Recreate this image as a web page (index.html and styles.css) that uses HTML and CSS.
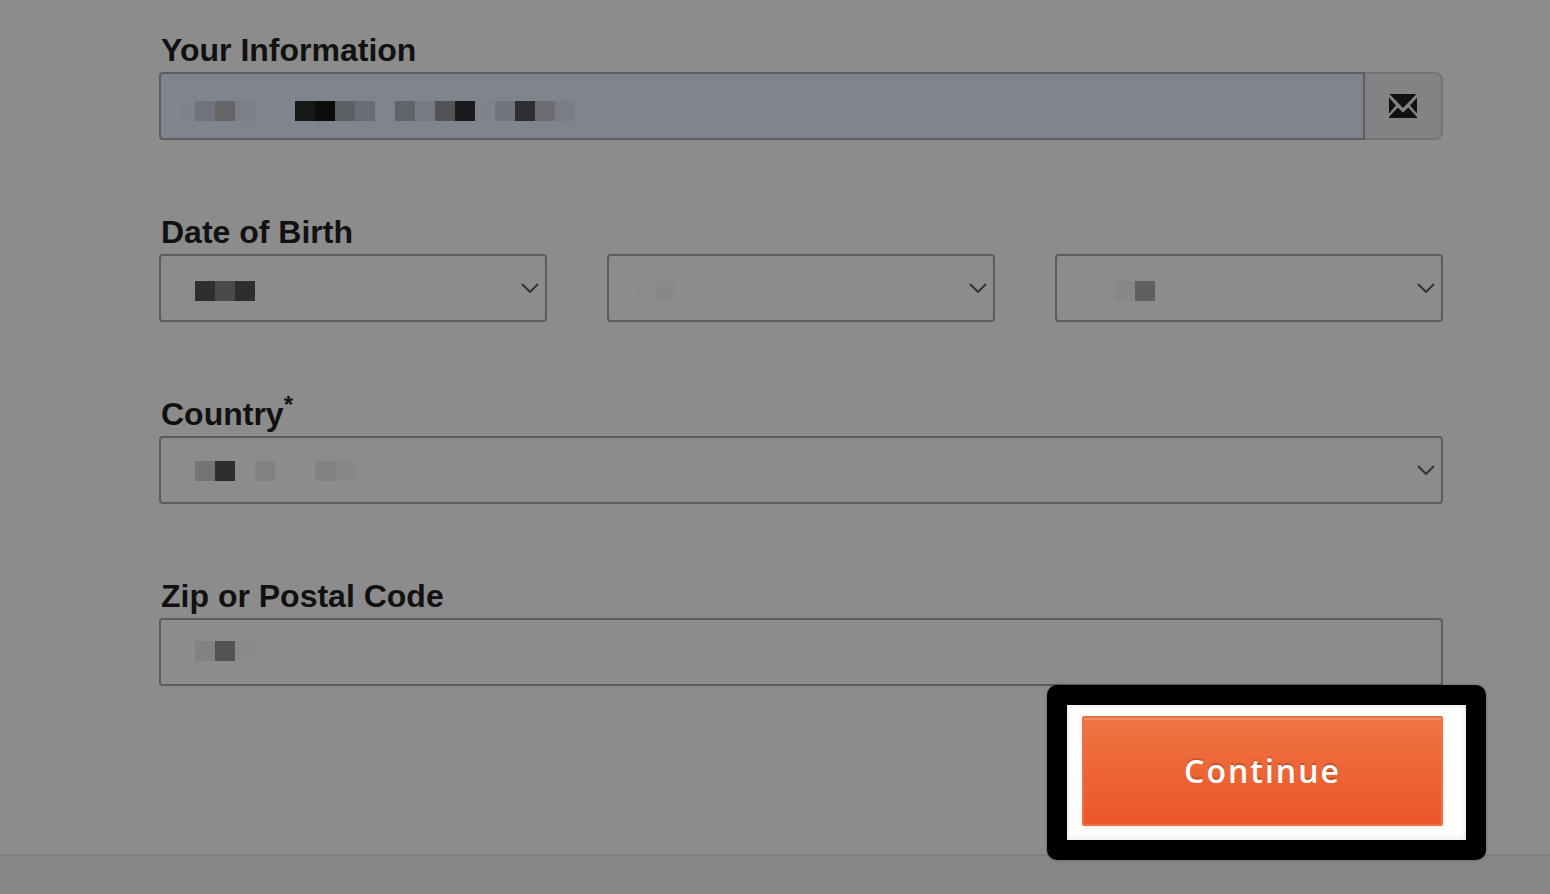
FILE: index.html
```html
<!DOCTYPE html>
<html lang="en">
<head>
<meta charset="utf-8">
<title>Your Information</title>
<meta name="viewport" content="width=device-width, initial-scale=1">
<link rel="stylesheet" href="styles.css">
</head>
<body>
<main>
  <form class="form">
    <div class="group">
      <label class="label" for="email">Your Information</label>
      <div class="field input-group">
        <input class="control control-filled" id="email" type="email">
        <span class="addon">
          <svg width="28" height="24" viewBox="0 0 28 24" fill="#111" aria-hidden="true">
            <path d="M.5 0H27.5L14 14Z"/>
            <path d="M0 3.5L7 11.5L0 19.5Z"/>
            <path d="M28 3.5L21 11.5L28 19.5Z"/>
            <path d="M0 24V23L8.8 13.6L14 18.8L19.2 13.6L28 23V24Z"/>
          </svg>
        </span>
        <svg class="redaction" aria-hidden="true">
          <rect x="21" y="29" width="15" height="20" fill="#7f838a"/>
          <rect x="36" y="29" width="20" height="20" fill="#70737b"/>
          <rect x="56" y="29" width="20" height="20" fill="#656568"/>
          <rect x="76" y="29" width="20" height="20" fill="#7b7f87"/>
          <rect x="136" y="29" width="20" height="20" fill="#17181a"/>
          <rect x="156" y="29" width="20" height="20" fill="#0a0c0b"/>
          <rect x="176" y="29" width="20" height="20" fill="#5c5f63"/>
          <rect x="196" y="29" width="20" height="20" fill="#6a6d75"/>
          <rect x="236" y="29" width="20" height="20" fill="#606367"/>
          <rect x="256" y="29" width="20" height="20" fill="#797b84"/>
          <rect x="276" y="29" width="20" height="20" fill="#525257"/>
          <rect x="296" y="29" width="20" height="20" fill="#1a1b1c"/>
          <rect x="316" y="29" width="20" height="20" fill="#7f838b"/>
          <rect x="336" y="29" width="20" height="20" fill="#72757d"/>
          <rect x="356" y="29" width="20" height="20" fill="#2e2f33"/>
          <rect x="376" y="29" width="20" height="20" fill="#6e6e72"/>
          <rect x="396" y="29" width="20" height="20" fill="#7a7d85"/>
        </svg>
      </div>
    </div>

    <div class="group">
      <label class="label" for="month">Date of Birth</label>
      <div class="date-row">
        <div class="field">
          <select class="control" id="month" aria-label="Month"><option></option></select>
          <svg class="chevron" viewBox="0 0 18 10" aria-hidden="true"><path d="M1 1L9 9L17 1"/></svg>
          <svg class="redaction" aria-hidden="true">
            <rect x="36" y="27" width="20" height="20" fill="#2e2e2e"/>
            <rect x="56" y="27" width="20" height="20" fill="#4a4a4a"/>
            <rect x="76" y="27" width="20" height="20" fill="#2e2e2e"/>
          </svg>
        </div>
        <div class="field">
          <select class="control" id="day" aria-label="Day"><option></option></select>
          <svg class="chevron" viewBox="0 0 18 10" aria-hidden="true"><path d="M1 1L9 9L17 1"/></svg>
          <svg class="redaction" aria-hidden="true">
            <rect x="28" y="27" width="20" height="20" fill="#8b8b8b"/>
            <rect x="48" y="27" width="20" height="20" fill="#888"/>
          </svg>
        </div>
        <div class="field">
          <select class="control" id="year" aria-label="Year"><option></option></select>
          <svg class="chevron" viewBox="0 0 18 10" aria-hidden="true"><path d="M1 1L9 9L17 1"/></svg>
          <svg class="redaction" aria-hidden="true">
            <rect x="60" y="27" width="20" height="20" fill="#878787"/>
            <rect x="80" y="27" width="20" height="20" fill="#606060"/>
          </svg>
        </div>
      </div>
    </div>

    <div class="group">
      <label class="label" for="country">Country<sup class="required">*</sup></label>
      <div class="field">
        <select class="control" id="country"><option></option></select>
        <svg class="chevron" viewBox="0 0 18 10" aria-hidden="true"><path d="M1 1L9 9L17 1"/></svg>
        <svg class="redaction" aria-hidden="true">
          <rect x="36" y="25" width="20" height="20" fill="#747474"/>
          <rect x="56" y="25" width="20" height="20" fill="#2e2e2e"/>
          <rect x="96" y="25" width="20" height="20" fill="#828282"/>
          <rect x="156" y="25" width="20" height="20" fill="#828282"/>
          <rect x="176" y="25" width="20" height="20" fill="#878787"/>
        </svg>
      </div>
    </div>

    <div class="group">
      <label class="label" for="zip">Zip or Postal Code</label>
      <div class="field">
        <input class="control" id="zip" type="text">
        <svg class="redaction" aria-hidden="true">
          <rect x="36" y="23" width="20" height="20" fill="#828282"/>
          <rect x="56" y="23" width="20" height="20" fill="#525252"/>
          <rect x="76" y="23" width="20" height="20" fill="#8a8a8a"/>
        </svg>
      </div>
    </div>

    <div class="actions">
      <div class="spotlight">
        <button class="continue" type="submit">Continue</button>
      </div>
    </div>
  </form>
</main>
<footer class="footer"></footer>
</body>
</html>
```
FILE: styles.css
```css
* {
  box-sizing: border-box;
}

body {
  display: flex;
  flex-direction: column;
  min-height: 100vh;
  margin: 0;
  background: #8c8c8c;
  color: #111;
  font-family: "Liberation Sans", Arial, sans-serif;
}

.form {
  display: flex;
  flex-direction: column;
  gap: 70px;
  padding: 28px 107px 28px 159px;
}

.label {
  display: block;
  padding-left: 2px;
  font-size: 32px;
  font-weight: bold;
  line-height: 44px;
}

.required {
  font-size: 24px;
  line-height: 0;
}

.field {
  position: relative;
}

.control {
  display: block;
  width: 100%;
  height: 68px;
  margin: 0;
  padding: 0 34px;
  border: 2px solid #5c5c5c;
  border-radius: 4px;
  background: transparent;
  color: #111;
  font: 32px "Liberation Sans", Arial, sans-serif;
  appearance: none;
}

.control-filled {
  flex: 1;
  min-width: 0;
  border-radius: 4px 0 0 4px;
  border-color: #5c5e61;
  background: #80848c;
}

.input-group {
  display: flex;
}

.addon {
  display: flex;
  align-items: center;
  justify-content: center;
  width: 78px;
  border: 2px solid #757575;
  border-left: 0;
  border-radius: 0 8px 8px 0;
  background: #838383;
}

.redaction {
  position: absolute;
  inset: 0;
  width: 100%;
  height: 100%;
  pointer-events: none;
}

.chevron {
  position: absolute;
  top: 29px;
  right: 8px;
  width: 18px;
  height: 10px;
  fill: none;
  stroke: #333;
  stroke-width: 2;
  pointer-events: none;
}

.date-row {
  display: grid;
  grid-template-columns: repeat(3, 1fr);
  gap: 60px;
}

.actions {
  display: flex;
  justify-content: flex-end;
  margin-top: -40px;
}

.spotlight {
  position: relative;
}

.spotlight::before {
  content: "";
  position: absolute;
  inset: -31px -43px -34px -35px;
  border: 20px solid #000;
  border-radius: 10px;
  background: #fff;
  box-shadow: 0 0 3px rgba(0, 0, 0, 0.3), inset 0 0 6px rgba(0, 0, 0, 0.12);
}

.continue {
  position: relative;
  display: block;
  width: 361px;
  height: 110px;
  padding: 0 0 2px;
  border: 2px solid #f0703f;
  border-radius: 2px;
  background: linear-gradient(#ef7444, #eb5628);
  box-shadow: inset 0 2px 0 rgba(255, 255, 255, 0.18), 0 2px 4px rgba(0, 0, 0, 0.1);
  color: #fff;
  font: 600 32px "Open Sans", sans-serif;
  letter-spacing: 2px;
  text-shadow: 0 -2px 0 rgba(0, 0, 0, 0.2);
}

.footer {
  flex: 1;
  min-height: 40px;
  border-top: 2px solid #7f7f7f;
  background: #868686;
}
```
